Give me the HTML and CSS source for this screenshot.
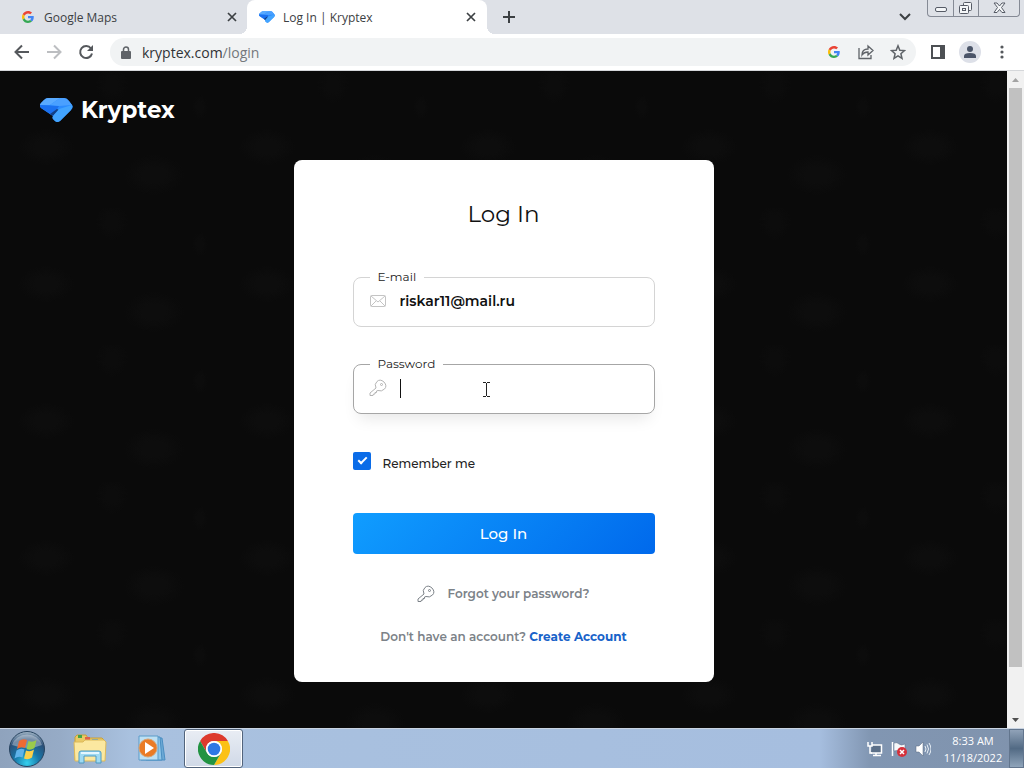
FILE: index.html
```html
<!DOCTYPE html>
<html lang="en">
<head>
  <meta charset="UTF-8">
  <meta name="viewport" content="width=device-width, initial-scale=1.0">
  <title>Log In | Kryptex</title>
  <link rel="stylesheet" href="styles.css">
</head>
<body>

<!-- shared shapes -->
<svg class="defs" width="0" height="0" aria-hidden="true">
  <symbol id="google" viewBox="0 0 48 48">
    <path fill="#ea4335" d="M24 9.500c3.500 0 6.700 1.200 9.200 3.600l6.900-6.900C35.900 2.400 30.500 0 24 0 14.600 0 6.500 5.400 2.600 13.200l8 6.200C12.400 13.700 17.700 9.500 24 9.500z"/>
    <path fill="#4285f4" d="M47 24.600c0-1.600-.2-3.100-.4-4.600H24v9h12.900c-.6 3-2.200 5.500-4.700 7.200l7.700 6C44.400 38 47 31.800 47 24.600z"/>
    <path fill="#fbbc05" d="M10.500 28.600c-.5-1.500-.8-3-.8-4.600s.3-3.100.8-4.600l-8-6.200C.9 16.500 0 20.100 0 24s.9 7.500 2.600 10.800z"/>
    <path fill="#34a853" d="M24 48c6.500 0 11.900-2.100 15.900-5.800l-7.700-6c-2.200 1.500-4.900 2.300-8.200 2.300-6.300 0-11.600-4.200-13.500-9.900l-8 6.200C6.500 42.600 14.600 48 24 48z"/>
  </symbol>
  <symbol id="kryptex" viewBox="0 0 33 26">
    <path fill="#2b8cff" d="M8 1h16q3 0 5 3l3 4q2 2-1 5L20 24q-3 2-5 0l-2-2q-1-1 0-3L1 11Q-1 9 1 6l3-3q2-2 4-2z"/>
    <path fill="#59aaff" d="M8 1h12L10 8 0 8q0-1 1-2l3-3q2-2 4-2z"/>
    <path fill="#1b71f0" d="M0 8l19 1-6 10L1 11Q0 10 0 8z"/>
    <path fill="#4aa0ff" d="M20 1h4q3 0 5 3l3 4L19 9 10 8z"/>
    <path fill="#123f86" d="M19 13l-6 6-3-2 7-5z"/>
    <path fill="#42a4ff" d="M19 12l13-4q1 2-1 5L20 24q-3 2-5 0l-2-2q-1-1 0-3z"/>
  </symbol>
  <symbol id="close" viewBox="0 0 10 10">
    <path d="M1 1l8 8M9 1L1 9" stroke="#3c4043" stroke-width="1.700"/>
  </symbol>
  <symbol id="key" viewBox="0 0 18 18">
    <g fill="none" stroke="currentColor" stroke-linejoin="round">
      <path d="M7 9Q5 5 8 2.500q3-3 7 .5 3.500 4 .5 7-3 3-6.500 1.500L7.500 12v1.500H6V15H4.500L4 16.500H1v-2.500z"/>
      <circle cx="12.500" cy="5.500" r="1"/>
    </g>
  </symbol>
</svg>

<div class="tabs">
  <div class="tab">
    <svg class="tab-icon google-icon"><use href="#google"/></svg>
    <span class="tab-title">Google Maps</span>
    <button class="icon-btn" aria-label="Close tab"><svg width="10" height="10"><use href="#close"/></svg></button>
  </div>
  <div class="tab active">
    <svg class="tab-icon"><use href="#kryptex"/></svg>
    <span class="tab-title">Log In | Kryptex</span>
    <button class="icon-btn" aria-label="Close tab"><svg width="10" height="10"><use href="#close"/></svg></button>
  </div>
  <button class="icon-btn new-tab" aria-label="New tab">
    <svg width="14" height="14"><path d="M7 1v12M1 7h12" stroke="#3c4043" stroke-width="2"/></svg>
  </button>
  <button class="icon-btn tab-search" aria-label="Search tabs">
    <svg width="12" height="8"><path d="M1 1l5 5 5-5" fill="none" stroke="#3c4043" stroke-width="2"/></svg>
  </button>
  <div class="window-btns">
    <button aria-label="Minimize"><svg width="12" height="6"><rect x=".5" y=".5" width="11" height="4" rx="1.500" fill="#f4f6f8" stroke="#565b66"/></svg></button>
    <button aria-label="Restore"><svg width="14" height="14" fill="#f4f6f8" stroke="#565b66"><rect x="4.500" y="1.500" width="8" height="8" rx="1"/><rect x=".5" y="4.500" width="9" height="8" rx="1"/><rect x="3.500" y="7.500" width="3" height="2"/></svg></button>
    <button class="wide" aria-label="Close"><svg width="13" height="12"><path d="M1 1h3l2.500 3L9 1h3L8.500 5.500 12 10.500H9l-2.500-3-2.500 3H1L4.500 5.500z" fill="#f4f6f8" stroke="#565b66"/></svg></button>
  </div>
</div>

<div class="toolbar">
  <button class="icon-btn" aria-label="Back"><svg width="16" height="16" fill="none" stroke="#55585c" stroke-width="2"><path d="M15 8H2M8 1.500L1.500 8 8 14.500"/></svg></button>
  <button class="icon-btn" aria-label="Forward"><svg width="16" height="16" fill="none" stroke="#bcbec1" stroke-width="2"><path d="M1 8h13M8 1.500L14.500 8 8 14.500"/></svg></button>
  <button class="icon-btn" aria-label="Reload"><svg width="16" height="16"><path d="M13 4.500A6 6 0 1 0 14 9.500" fill="none" stroke="#55585c" stroke-width="2"/><path d="M15 1v6H9z" fill="#55585c"/></svg></button>
  <div class="omnibox">
    <svg width="10" height="13"><path d="M2.500 6V3.500a2.500 2.500 0 0 1 5 0V6" fill="none" stroke="#5f6368" stroke-width="1.500"/><rect y="5" width="10" height="8" rx="1" fill="#5f6368"/></svg>
    <span class="url">kryptex.com<span class="path">/login</span></span>
    <button class="icon-btn" aria-label="Google"><svg width="12" height="12"><use href="#google"/></svg></button>
    <button class="icon-btn" aria-label="Share"><svg width="16" height="16" fill="none" stroke="#5f6368" stroke-width="1.300"><path d="M1 4v10.500h12V11"/><path d="M4 11q0-6 6-6V2l5 4.500-5 4.500V8q-4 0-6 3z"/></svg></button>
    <button class="icon-btn" aria-label="Bookmark"><svg width="16" height="16" fill="none" stroke="#5f6368" stroke-width="1.500"><path d="M8 1.800l1.800 4.400 4.700.4-3.600 3.100 1.100 4.600L8 11.800l-4 2.500 1.100-4.600-3.600-3.100 4.700-.4z"/></svg></button>
  </div>
  <button class="icon-btn" aria-label="Side panel"><svg width="14" height="14"><rect x="1" y="1" width="12" height="12" fill="none" stroke="#4d5054" stroke-width="2"/><path d="M9 1h4v12H9z" fill="#4d5054"/></svg></button>
  <button class="icon-btn profile" aria-label="Profile"><svg width="12" height="12" fill="#4b5569"><circle cx="6" cy="3" r="3"/><path d="M0 12V10q0-3 6-3t6 3v2z"/></svg></button>
  <button class="icon-btn menu-btn" aria-label="Menu"><svg width="4" height="14" fill="#55585c"><circle cx="2" cy="2" r="1.600"/><circle cx="2" cy="7" r="1.600"/><circle cx="2" cy="12" r="1.600"/></svg></button>
</div>

<div class="viewport">
  <div class="page">
    <header>
      <a href="#" class="logo">
        <svg width="33" height="26"><use href="#kryptex"/></svg>
        Kryptex
      </a>
    </header>
    <main>
      <form class="card">
        <h1>Log In</h1>

        <fieldset class="field">
          <legend><label for="email">E-mail</label></legend>
          <svg width="18" height="14" fill="none" stroke="#c4c4c4"><rect x="1.500" y="1.500" width="15" height="11" rx="1"/><path d="M2 2l7 6 7-6M2 12l5-5M16 12l-5-5"/></svg>
          <input type="text" id="email" value="riskar11@mail.ru">
        </fieldset>

        <fieldset class="field focused">
          <legend><label for="password">Password</label></legend>
          <svg class="key" width="18" height="18"><use href="#key"/></svg>
          <span class="caret"></span>
          <input type="password" id="password">
          <svg class="pointer" width="9" height="17"><path d="M1 1.500h3M5 1.500h3M4.500 2v13M1 15.500h3M5 15.500h3" stroke="#222" fill="none"/></svg>
        </fieldset>

        <div class="remember">
          <input type="checkbox" id="remember" checked>
          <label for="remember">Remember me</label>
        </div>

        <button type="submit" class="submit">Log In</button>

        <a href="#" class="forgot">
          <svg width="18" height="18"><use href="#key"/></svg>
          Forgot your password?
        </a>
        <p class="signup">Don't have an account? <a href="#">Create Account</a></p>
      </form>
    </main>
  </div>

  <div class="scrollbar">
    <button aria-label="Scroll up"><svg width="7" height="4"><path d="M0 4l3.500-4L7 4z" fill="#a3a3a3"/></svg></button>
    <div class="track"><div class="thumb"></div></div>
    <button aria-label="Scroll down"><svg width="7" height="4"><path d="M0 0l3.500 4L7 0z" fill="#505050"/></svg></button>
  </div>
</div>

<div class="taskbar">
  <button class="start" aria-label="Start">
    <svg width="38" height="38" viewBox="0 0 38 38">
      <defs>
        <radialGradient id="orb" cx=".5" cy=".9" r=".9">
          <stop offset="0" stop-color="#35d0ee"/>
          <stop offset=".4" stop-color="#1777a8"/>
          <stop offset=".75" stop-color="#2b4f78"/>
          <stop offset="1" stop-color="#a9bccb"/>
        </radialGradient>
      </defs>
      <circle cx="19" cy="19" r="17.500" fill="url(#orb)" stroke="#27435f"/>
      <path d="M4 15a15.500 14 0 0 1 30 0q-14 6-30 0z" fill="#fff" opacity=".35"/>
      <path d="M11 11q4-3 8-1l-2 8q-4-2-8 1z" fill="#ee6a33"/>
      <path d="M20.500 11q4 2 8-1l-2 8q-4 3-8 1z" fill="#9acb4b"/>
      <path d="M8.500 20.500q4-3 8-1l-2 8q-4-2-8 1z" fill="#5fb3ea"/>
      <path d="M18 20.500q4 2 8-1l-2 8q-4 3-8 1z" fill="#fbd04a"/>
    </svg>
  </button>
  <button class="task" aria-label="Windows Explorer">
    <svg width="34" height="30" viewBox="0 0 34 30">
      <path d="M2 3l2-2h9l2 3h14l2 2v20H2z" fill="#e9c965" stroke="#c69f3b"/>
      <path d="M5 1h4v3H5z" fill="#42a447"/>
      <path d="M12 3h5v3h-5z" fill="#df604a"/>
      <path d="M19 5h6v3h-6z" fill="#4d9fda"/>
      <path d="M1 8h9l2-2h19l2 2-1 19H2z" fill="#fbe8a0" stroke="#dcb95b"/>
      <path d="M6 29V19q0-2 2-2h18q2 0 2 2v10h-5v-7H11v7z" fill="#9fdaf2" stroke="#4c9ac2"/>
      <path d="M8 19h18" stroke="#e4f7ff" stroke-width="2"/>
    </svg>
  </button>
  <button class="task" aria-label="Windows Media Player">
    <svg width="30" height="28" viewBox="0 0 30 28">
      <path d="M7 3h18l3 22H9z" fill="#6ca9d5" stroke="#4a8ec2"/>
      <path d="M4 2h19l2 23H4z" fill="#8fc6e8" stroke="#4a8ec2"/>
      <path d="M2 1h19v24H2z" fill="#bde0f3" stroke="#5b9bc9"/>
      <circle cx="11" cy="13" r="9" fill="#ea7b25" stroke="#d6a373"/>
      <path d="M8 7l9 6-9 6z" fill="#fff"/>
    </svg>
  </button>
  <button class="task open" aria-label="Google Chrome">
    <svg width="32" height="32" viewBox="0 0 48 48">
      <path fill="#dd3a2d" d="M3.200 12A24 24 0 0 1 44.800 12H24a12 12 0 0 0-10.400 18z"/>
      <path fill="#fbc116" d="M44.800 12A24 24 0 0 1 24 48l10.400-18A12 12 0 0 0 24 12z"/>
      <path fill="#229342" d="M24 48A24 24 0 0 1 3.200 12l10.400 18A12 12 0 0 0 34.400 30z"/>
      <circle cx="24" cy="24" r="12" fill="#fff"/>
      <circle cx="24" cy="24" r="9.500" fill="#2f78e4"/>
    </svg>
  </button>
  <div class="tray">
    <svg width="16" height="16"><path d="M5 4h9.500v8H4" fill="#5c7089" stroke="#fff" stroke-width="1.500"/><path d="M1 1v4h4V1M3 5v7h2M9 12v2M6 14.500h8" fill="none" stroke="#fff" stroke-width="1.500"/></svg>
    <svg width="16" height="16"><path d="M1.500 1v14" stroke="#fff" stroke-width="1.500"/><path d="M3 2q3-1 5 1t6 0v7q-4 1-6 0t-5 0z" fill="#f6f8fa" stroke="#5d6f86" stroke-width=".5"/><circle cx="11" cy="11" r="5" fill="#d5303a"/><path d="M9 9l4 4M13 9l-4 4" stroke="#fff" stroke-width="1.500"/></svg>
    <svg width="16" height="16"><path d="M1 5h3l4-4v14l-4-4H1z" fill="#fff" stroke="#55677f" stroke-width=".5"/><path d="M10 5q2 3 0 6M12 3.500q3 4.500 0 9M14 2q4 6 0 12" fill="none" stroke="#e8eff6"/></svg>
  </div>
  <div class="clock">8:33 AM<br>11/18/2022</div>
  <button class="show-desktop" aria-label="Show desktop"></button>
</div>

</body>
</html>
```
FILE: styles.css
```css
* {
  box-sizing: border-box;
}
body {
  margin: 0;
  min-height: 100vh;
  display: flex;
  flex-direction: column;
  font-family: "Open Sans", "Noto Sans", sans-serif;
  font-size: 12px;
  color: #3c4043;
}
button {
  padding: 0;
  border: none;
  background: none;
  font-family: inherit;
}
svg {
  flex: none;
  display: block;
}
.defs {
  position: absolute;
}

/* tab strip */
.tabs {
  display: flex;
  height: 34px;
  background: #dee1e7;
}
.tab {
  display: flex;
  align-items: center;
  gap: 8px;
  flex: 0 1 247px;
  padding: 0 7px 0 20px;
}
.tab.active {
  position: relative;
  flex-basis: 240px;
  padding: 0 8px 0 12px;
  background: #fff;
  border-radius: 8px 8px 0 0;
}
.tab.active::before,
.tab.active::after {
  content: "";
  position: absolute;
  bottom: 0;
  width: 8px;
  height: 8px;
}
.tab.active::before {
  right: 100%;
  background: radial-gradient(circle at 0 0, transparent 8px, #fff 8px);
}
.tab.active::after {
  left: 100%;
  background: radial-gradient(circle at 100% 0, transparent 8px, #fff 8px);
}
.tab-icon {
  width: 16px;
  height: 14px;
}
.google-icon {
  height: 12px;
}
.tab-title {
  flex: 1;
  white-space: nowrap;
}
.icon-btn {
  display: flex;
  align-items: center;
  justify-content: center;
  flex: none;
  width: 16px;
  height: 16px;
}
.new-tab {
  align-self: center;
  margin-left: 14px;
}
.tab-search {
  align-self: center;
  margin: 0 14px 0 auto;
}
.window-btns {
  display: flex;
  align-self: flex-start;
  height: 17px;
  margin-right: 4px;
  border: 1px solid #858a95;
  border-top: none;
  border-radius: 0 0 4px 4px;
}
.window-btns button {
  display: flex;
  align-items: center;
  justify-content: center;
  width: 25px;
}
.window-btns button:first-child {
  padding-top: 4px;
}
.window-btns button + button {
  border-left: 1px solid #858a95;
}
.window-btns .wide {
  width: 41px;
}

/* address bar */
.toolbar {
  display: flex;
  align-items: center;
  gap: 16px;
  height: 37px;
  padding: 0 14px;
  background: #fff;
  border-bottom: 1px solid #d5d7da;
}
.omnibox {
  display: flex;
  align-items: center;
  flex: 1;
  gap: 16px;
  height: 28px;
  margin-right: -2px;
  padding: 0 10px 0 11px;
  border-radius: 14px;
  background: #f1f3f4;
}
.url {
  flex: 1;
  margin-left: -5px;
  font-size: 14px;
  color: #303236;
}
.path {
  color: #74787c;
}
.profile {
  width: 22px;
  height: 22px;
  margin: 0 -3px;
  border-radius: 50%;
  background: #dde0e8;
}

/* page */
.viewport {
  display: flex;
  flex: 1;
}
.page {
  flex: 1;
  padding-bottom: 46px;
  background-color: #0a0a0a;
  background-image:
    radial-gradient(ellipse 28px 18px at 46px 76px, #0d0d0d 40%, transparent),
    radial-gradient(ellipse 30px 20px at 154px 104px, #0d0d0d 40%, transparent),
    radial-gradient(ellipse 16px 18px at 112px 14px, #0c0c0c 40%, transparent),
    radial-gradient(ellipse 8px 12px at 200px 36px, #0c0c0c 40%, transparent);
  background-size: 221px 137px;
  font-family: Montserrat, Inter, sans-serif;
}
header {
  padding: 24px 40px 0;
}
.logo {
  display: inline-flex;
  align-items: center;
  gap: 8px;
  height: 30px;
  font-size: 23px;
  font-weight: 700;
  color: #fff;
  text-decoration: none;
}
main {
  display: flex;
  justify-content: center;
  padding-top: 34px;
}
.card {
  width: 420px;
  padding: 38px 59px 35px;
  border-radius: 8px;
  background: #fff;
}
h1 {
  margin: 0 0 40px;
  font-size: 23px;
  font-weight: 400;
  line-height: 32px;
  text-align: center;
  color: #111;
}
.field {
  position: relative;
  display: flex;
  align-items: center;
  height: 57px;
  margin: 0 0 30px;
  padding: 0 15px 8px;
  border: 1px solid #d4d4d4;
  border-radius: 8px;
}
.field.focused {
  border-color: #a6a6a6;
  box-shadow: 0 10px 16px -6px rgba(0, 0, 0, 0.1);
}
.field legend {
  margin-left: 1px;
  padding: 0 8px;
  font-size: 12px;
  line-height: 14px;
  color: #222;
}
.field input {
  flex: 1;
  min-width: 0;
  height: 32px;
  margin-left: 13px;
  padding: 0;
  border: none;
  outline: none;
  background: none;
  font-family: inherit;
  font-size: 14px;
  font-weight: 600;
  color: #111;
}
.key {
  color: #b4b4b4;
}
.caret {
  width: 1px;
  height: 19px;
  margin-left: 13px;
  background: #111;
}
.pointer {
  position: absolute;
  left: 128px;
  top: 10px;
}
.remember {
  display: flex;
  align-items: center;
  gap: 12px;
  height: 22px;
  margin-top: 36px;
  font-size: 12px;
  font-weight: 500;
  color: #222;
}
.remember label {
  padding-top: 4px;
}
.remember input {
  appearance: none;
  width: 18px;
  height: 18px;
  margin: 0;
  border-radius: 2px;
  background: #0a6ce8;
}
.remember input:checked::before {
  content: "";
  display: block;
  width: 7px;
  height: 3px;
  margin: 5px 0 0 5px;
  border: solid #fff;
  border-width: 0 0 2px 2px;
  transform: rotate(-45deg);
}
.submit {
  display: block;
  width: 100%;
  height: 41px;
  margin-top: 41px;
  border-radius: 4px;
  background: linear-gradient(135deg, #109dff, #0069ec);
  font-size: 15px;
  font-weight: 500;
  color: #fff;
}
.forgot {
  display: flex;
  align-items: center;
  justify-content: center;
  gap: 12px;
  margin-top: 30px;
  font-size: 12px;
  font-weight: 600;
  line-height: 20px;
  color: #7c8288;
  text-decoration: none;
}
.signup {
  margin: 23px 0 0;
  font-size: 12px;
  font-weight: 600;
  line-height: 20px;
  text-align: center;
  color: #7c8288;
}
.signup a {
  font-weight: 700;
  color: #1762c9;
  text-decoration: none;
}

/* scrollbar */
.scrollbar {
  display: flex;
  flex-direction: column;
  width: 17px;
  background: #f1f1f1;
}
.scrollbar button {
  display: flex;
  align-items: center;
  justify-content: center;
  height: 17px;
}
.track {
  flex: 1;
  padding: 0 2px;
}
.thumb {
  height: 93%;
  background: #c1c1c1;
}

/* taskbar */
.taskbar {
  display: flex;
  height: 40px;
  border-top: 1px solid #c9d4e2;
  background: linear-gradient(90deg, #8fa3bd 0, #96abc6 60px, #a9c1df 130px, #a6bedf 80%, #8196b2 85%, #8093ad);
}
.start {
  display: flex;
  align-items: center;
  width: 54px;
  padding-left: 8px;
}
.task {
  display: flex;
  align-items: center;
  justify-content: center;
  width: 59px;
  margin-left: 3px;
}
.start + .task {
  margin-left: 6px;
}
.task.open {
  border: 1px solid #52647c;
  border-radius: 3px;
  background: linear-gradient(#e9edf4, #d0d9e7);
  box-shadow: inset 0 0 0 1px #fff;
}
.tray {
  display: flex;
  align-items: center;
  gap: 8px;
  margin: 0 6px 0 auto;
}
.clock {
  width: 72px;
  padding-top: 3px;
  text-align: center;
  font-size: 11px;
  line-height: 17px;
  color: #fff;
}
.show-desktop {
  width: 15px;
  border: 1px solid #62758d;
  background: linear-gradient(#90a2b8, #526a84 50%, #8fa4ba);
}
```
